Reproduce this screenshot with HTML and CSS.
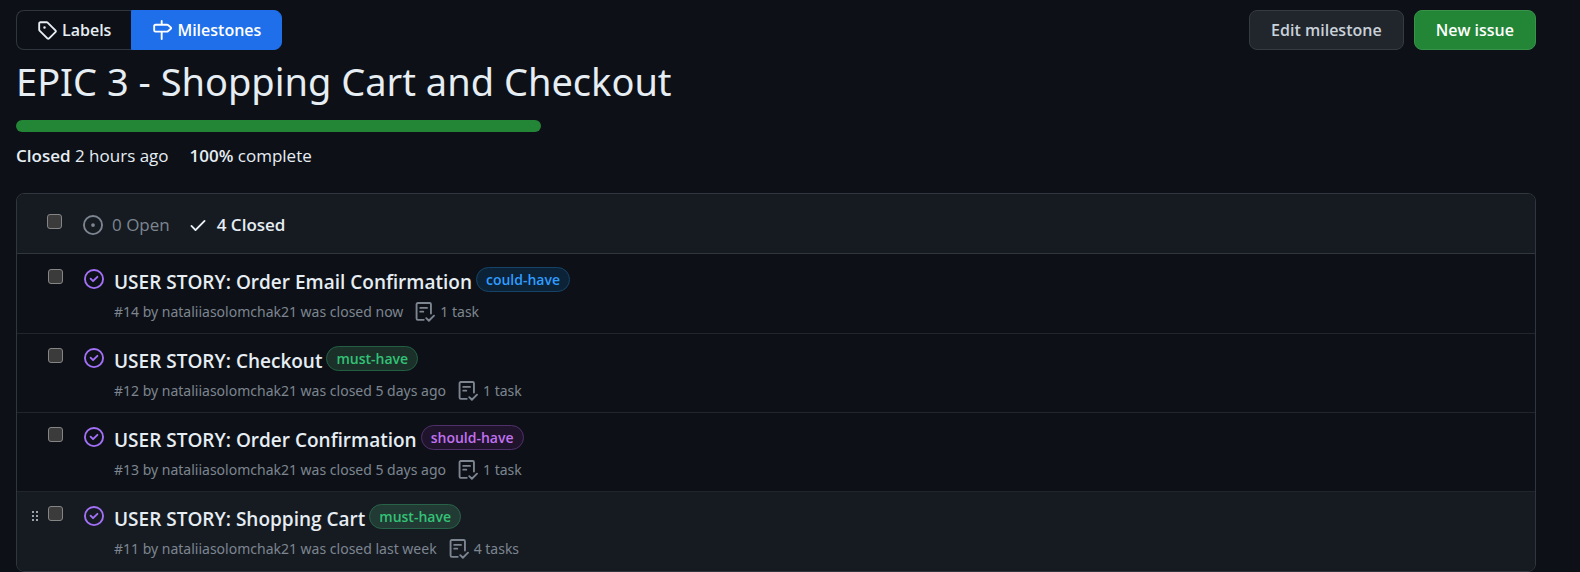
FILE: index.html
```html
<!DOCTYPE html>
<html lang="en">
<head>
<meta charset="utf-8">
<title>EPIC 3 - Shopping Cart and Checkout</title>
<link rel="stylesheet" href="styles.css">
</head>
<body>
<svg class="sprite" aria-hidden="true">
  <symbol id="tag" viewBox="0 0 16 16"><path d="M1 7.775V2.75C1 1.784 1.784 1 2.75 1h5.025c.464 0 .91.184 1.238.513l6.25 6.25a1.75 1.75 0 0 1 0 2.474l-5.026 5.026a1.75 1.75 0 0 1-2.474 0l-6.25-6.25A1.752 1.752 0 0 1 1 7.775Zm1.5 0c0 .066.026.13.073.177l6.25 6.25a.25.25 0 0 0 .354 0l5.025-5.025a.25.25 0 0 0 0-.354l-6.25-6.25a.25.25 0 0 0-.177-.073H2.75a.25.25 0 0 0-.25.25ZM6 5a1 1 0 1 1 0 2 1 1 0 0 1 0-2Z"/></symbol>
  <symbol id="milestone" viewBox="0 0 16 16"><path d="M7.75 0a.75.75 0 0 1 .75.75V3h3.634c.414 0 .814.147 1.13.414l2.07 1.75a1.75 1.75 0 0 1 0 2.672l-2.07 1.75a1.75 1.75 0 0 1-1.13.414H8.5v5.25a.75.75 0 0 1-1.5 0V10H2.75A1.75 1.75 0 0 1 1 8.25v-3.5C1 3.784 1.784 3 2.75 3H7V.75A.75.75 0 0 1 7.75 0Zm4.384 8.5a.25.25 0 0 0 .161-.06l2.07-1.75a.248.248 0 0 0 0-.38l-2.07-1.75a.25.25 0 0 0-.161-.06H2.75a.25.25 0 0 0-.25.25v3.5c0 .138.112.25.25.25h9.384Z"/></symbol>
  <symbol id="open" viewBox="0 0 16 16"><path d="M8 9.5a1.5 1.5 0 1 0 0-3 1.5 1.5 0 0 0 0 3Z"/><path d="M8 0a8 8 0 1 1 0 16A8 8 0 0 1 8 0ZM1.5 8a6.5 6.5 0 1 0 13 0 6.5 6.5 0 0 0-13 0Z"/></symbol>
  <symbol id="check" viewBox="0 0 16 16"><path d="M13.78 4.22a.75.75 0 0 1 0 1.06l-7.25 7.25a.75.75 0 0 1-1.06 0L2.22 9.28a.751.751 0 0 1 .018-1.042.751.751 0 0 1 1.042-.018L6 10.94l6.72-6.72a.75.75 0 0 1 1.06 0Z"/></symbol>
  <symbol id="closed" viewBox="0 0 16 16"><path d="M11.28 6.78a.75.75 0 0 0-1.06-1.06L7.25 8.69 5.78 7.22a.75.75 0 0 0-1.06 1.06l2 2a.75.75 0 0 0 1.06 0l3.5-3.5Z"/><path d="M16 8A8 8 0 1 1 0 8a8 8 0 0 1 16 0Zm-1.5 0a6.5 6.5 0 1 0-13 0 6.5 6.5 0 0 0 13 0Z"/></symbol>
  <symbol id="tasks" viewBox="0 0 16 16"><path d="M7 14.25H2.25a1 1 0 0 1-1-1V1.75a1 1 0 0 1 1-1h9.5a1 1 0 0 1 1 1v7.5M4.2 4.7h5.4M4.2 7.7h2.4M9 12.9l2.1 2.1 4.1-4.1" fill="none" stroke="currentColor" stroke-width="1.5" stroke-linecap="round" stroke-linejoin="round"/></symbol>
  <symbol id="grip" viewBox="0 0 16 16"><path d="M10 13a1 1 0 1 1 0-2 1 1 0 0 1 0 2Zm0-4a1 1 0 1 1 0-2 1 1 0 0 1 0 2Zm-4 4a1 1 0 1 1 0-2 1 1 0 0 1 0 2Zm5-9a1 1 0 1 1-2 0 1 1 0 0 1 2 0ZM7 8a1 1 0 1 1-2 0 1 1 0 0 1 2 0ZM6 5a1 1 0 1 1 0-2 1 1 0 0 1 0 2Z"/></symbol>
</svg>
<main class="page">
  <div class="toolbar">
    <nav class="subnav" aria-label="Issues">
      <a class="subnav-item" href="#labels"><svg class="icon"><use href="#tag"/></svg>Labels</a>
      <a class="subnav-item selected" href="#milestones" aria-current="page"><svg class="icon"><use href="#milestone"/></svg>Milestones</a>
    </nav>
    <div class="actions">
      <button class="btn" type="button">Edit milestone</button>
      <button class="btn primary" type="button">New issue</button>
    </div>
  </div>
  <h1 class="title">EPIC 3 - Shopping Cart and Checkout</h1>
  <div class="progress" role="progressbar" aria-label="Milestone progress" aria-valuenow="100"><span class="progress-fill" style="width:100%"></span></div>
  <div class="stats">
    <span><b>Closed</b> 2 hours ago</span>
    <span><b>100%</b> complete</span>
  </div>
  <section class="box">
    <header class="box-header">
      <input class="tick" type="checkbox" aria-label="Select all issues">
      <a class="state" href="#open"><svg class="icon"><use href="#open"/></svg>0 Open</a>
      <a class="state current" href="#closed"><svg class="icon"><use href="#check"/></svg>4 Closed</a>
    </header>
    <ul class="issues">
      <li class="issue">
        <span class="handle"></span>
        <input class="tick" type="checkbox" aria-label="Select issue 14">
        <svg class="icon done"><use href="#closed"/></svg>
        <div class="body">
          <div class="headline"><a class="name" href="#14">USER STORY: Order Email Confirmation</a><a class="label could" href="#could-have">could-have</a></div>
          <div class="meta"><span>#14 by nataliiasolomchak21 was closed now</span><span class="tasks"><svg class="icon"><use href="#tasks"/></svg>1 task</span></div>
        </div>
      </li>
      <li class="issue">
        <span class="handle"></span>
        <input class="tick" type="checkbox" aria-label="Select issue 12">
        <svg class="icon done"><use href="#closed"/></svg>
        <div class="body">
          <div class="headline"><a class="name" href="#12">USER STORY: Checkout</a><a class="label must" href="#must-have">must-have</a></div>
          <div class="meta"><span>#12 by nataliiasolomchak21 was closed 5 days ago</span><span class="tasks"><svg class="icon"><use href="#tasks"/></svg>1 task</span></div>
        </div>
      </li>
      <li class="issue">
        <span class="handle"></span>
        <input class="tick" type="checkbox" aria-label="Select issue 13">
        <svg class="icon done"><use href="#closed"/></svg>
        <div class="body">
          <div class="headline"><a class="name" href="#13">USER STORY: Order Confirmation</a><a class="label should" href="#should-have">should-have</a></div>
          <div class="meta"><span>#13 by nataliiasolomchak21 was closed 5 days ago</span><span class="tasks"><svg class="icon"><use href="#tasks"/></svg>1 task</span></div>
        </div>
      </li>
      <li class="issue active">
        <span class="handle"><svg class="grip"><use href="#grip"/></svg></span>
        <input class="tick" type="checkbox" aria-label="Select issue 11">
        <svg class="icon done"><use href="#closed"/></svg>
        <div class="body">
          <div class="headline"><a class="name" href="#11">USER STORY: Shopping Cart</a><a class="label must" href="#must-have">must-have</a></div>
          <div class="meta"><span>#11 by nataliiasolomchak21 was closed last week</span><span class="tasks"><svg class="icon"><use href="#tasks"/></svg>4 tasks</span></div>
        </div>
      </li>
    </ul>
  </section>
</main>
</body>
</html>
```
FILE: styles.css
```css
* { box-sizing: border-box; }

body {
  margin: 0;
  background: #0d1117;
  color: #e6edf3;
  font: 17px/26px "Open Sans", "Noto Sans", sans-serif;
}

a { color: inherit; text-decoration: none; }
b { font-weight: 600; }

.sprite { display: none; }
.icon { width: 20px; height: 20px; flex: none; fill: currentColor; }

.page { padding: 10px 44px 0 16px; }

.toolbar, .subnav, .actions, .stats, .box-header, .state, .headline, .meta, .tasks {
  display: flex;
  align-items: center;
}
.toolbar { justify-content: space-between; }

.subnav-item, .btn {
  display: flex;
  align-items: center;
  height: 40px;
  padding: 0 20px;
  border: 1px solid #30363d;
  font-family: inherit;
  font-size: 16px;
  font-weight: 600;
  white-space: nowrap;
}
.subnav-item { gap: 5px; }
.subnav-item:first-child { border-right: 0; border-radius: 8px 0 0 8px; }
.subnav-item:last-child { border-radius: 0 8px 8px 0; }
.subnav-item.selected { background: #1f6feb; border-color: #1f6feb; color: #fff; }

.actions { gap: 10px; }
.btn { padding: 0 21px; border-radius: 8px; border-color: #363b42; background: #21262d; color: #c9d1d9; }
.btn.primary { background: #238636; border-color: #38924a; color: #fff; }

.title { margin: 6px 0 14px; font-family: "Noto Sans", "Open Sans", sans-serif; font-size: 38px; line-height: 50px; font-weight: 400; }

.progress { width: 100%; max-width: 525px; height: 12px; border-radius: 6px; background: #21262d; overflow: hidden; }
.progress-fill { display: block; height: 100%; background: #238636; }

.stats { gap: 21px; margin: 11px 0 24px; }

.box { border: 1px solid #30363d; border-radius: 8px; overflow: hidden; }
.box-header { height: 60px; padding: 2px 0 0 30px; background: #161b22; border-bottom: 1px solid #30363d; }
.state { gap: 9px; color: #7d8590; }
.state.current { margin-left: 18px; color: #e6edf3; font-weight: 600; }

.tick {
  appearance: none;
  flex: none;
  width: 15px;
  height: 15px;
  margin: 0 21px 0 0;
  border: 1px solid #858585;
  border-radius: 3px;
  background: #3b3b3b;
}
.box-header .tick { margin-bottom: 6px; }

.issues { margin: 0; padding: 0; list-style: none; }
.issue { display: flex; align-items: flex-start; min-height: 79px; padding-top: 14px; border-top: 1px solid #21262d; }
.issue:first-child { border-top-color: transparent; }
.issue:last-child { min-height: 80px; }
.issue.active { background: #161b22; }
.handle { display: flex; align-items: center; justify-content: flex-end; width: 31px; height: 20px; padding-right: 5px; }
.grip { width: 16px; height: 16px; fill: #c9d1d9; }
.done { color: #a371f7; }
.body { min-width: 0; padding-left: 10px; }
.headline { gap: 4px; align-items: flex-start; height: 25px; margin-top: -2px; }
.name { font-size: 19px; line-height: 30px; font-weight: 600; }
.label { height: 25px; padding: 0 9px; border: 1px solid; border-radius: 13px; font-size: 14px; line-height: 23px; font-weight: 600; white-space: nowrap; }
.could { color: #2f9dff; background: #0c2237; border-color: #154468; }
.must { color: #33c276; background: #1a3029; border-color: #225f43; }
.active .must { background: #213a33; border-color: #286349; }
.should { color: #c271f0; background: #1f142b; border-color: #50306b; }
.meta { gap: 12px; margin-top: 8px; color: #7d8590; font-family: "Noto Sans", "Open Sans", sans-serif; font-size: 14px; line-height: 24px; }
.tasks { gap: 5px; }
```
